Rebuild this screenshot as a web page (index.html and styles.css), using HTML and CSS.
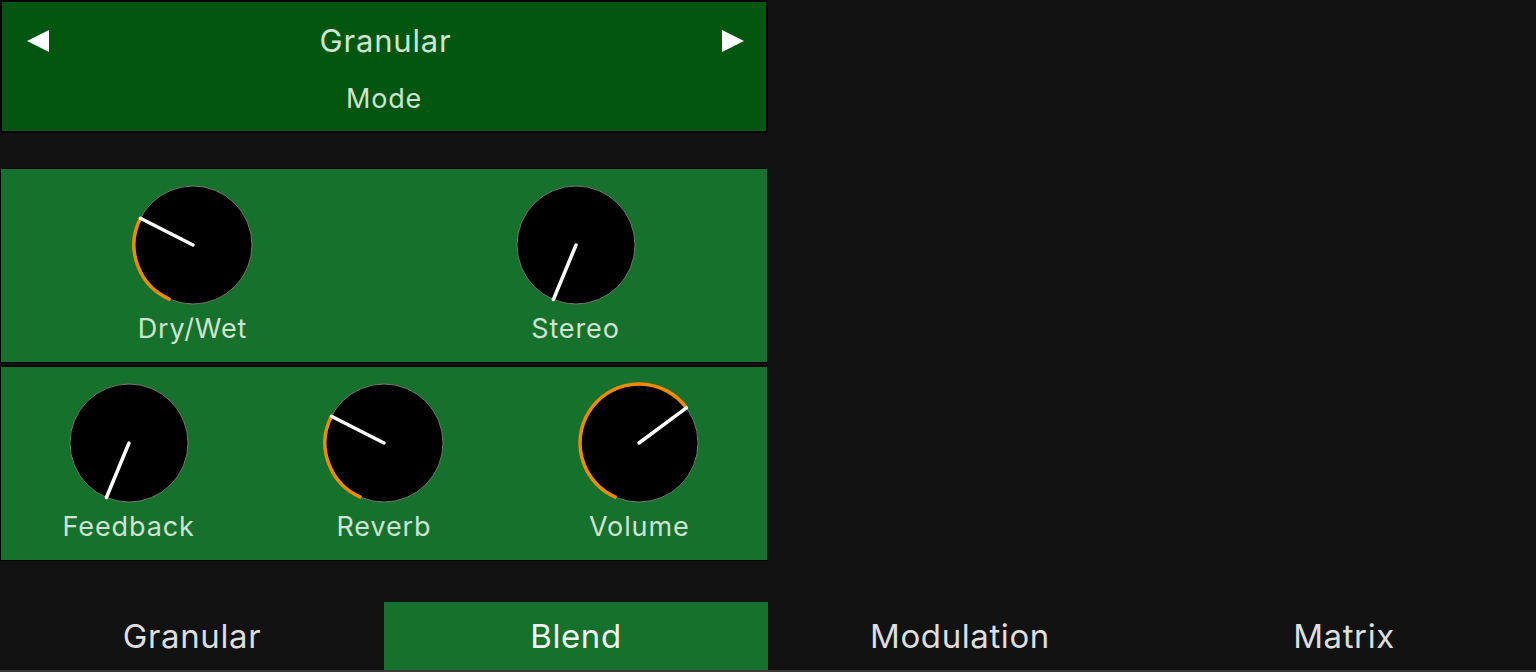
FILE: index.html
```html
<!DOCTYPE html>
<html>
<head>
<meta charset="utf-8">
<link rel="stylesheet" href="styles.css">
</head>
<body>
<div class="page">
  <div class="left">
    <div class="mode">
      <div class="mode-row">
        <svg class="arrow" width="24" height="24" viewBox="0 0 24 24"><polygon points="1,12 23,1 23,23" fill="#fff"/></svg>
        <div class="mode-value">Granular</div>
        <svg class="arrow" width="24" height="24" viewBox="0 0 24 24"><polygon points="23,12 1,1 1,23" fill="#fff"/></svg>
      </div>
      <div class="mode-label">Mode</div>
    </div>

    <div class="panel cols-2">
      <div class="knob">
        <svg width="124" height="124" viewBox="0 0 124 124">
          <circle cx="62" cy="62" r="59" class="knob-body"/>
          <path d="M39.42 116.51 A59 59 0 0 1 9.43 35.21" class="knob-arc"/>
          <line x1="62" y1="62" x2="9.43" y2="35.21" class="knob-ptr"/>
        </svg>
        <div class="knob-label">Dry/Wet</div>
      </div>
      <div class="knob">
        <svg width="124" height="124" viewBox="0 0 124 124">
          <circle cx="62" cy="62" r="59" class="knob-body"/>
          <line x1="62" y1="62" x2="39.42" y2="116.51" class="knob-ptr"/>
        </svg>
        <div class="knob-label">Stereo</div>
      </div>
    </div>

    <div class="panel cols-3">
      <div class="knob">
        <svg width="124" height="124" viewBox="0 0 124 124">
          <circle cx="62" cy="62" r="59" class="knob-body"/>
          <line x1="62" y1="62" x2="39.42" y2="116.51" class="knob-ptr"/>
        </svg>
        <div class="knob-label">Feedback</div>
      </div>
      <div class="knob">
        <svg width="124" height="124" viewBox="0 0 124 124">
          <circle cx="62" cy="62" r="59" class="knob-body"/>
          <path d="M39.42 116.51 A59 59 0 0 1 9.43 35.21" class="knob-arc"/>
          <line x1="62" y1="62" x2="9.43" y2="35.21" class="knob-ptr"/>
        </svg>
        <div class="knob-label">Reverb</div>
      </div>
      <div class="knob">
        <svg width="124" height="124" viewBox="0 0 124 124">
          <circle cx="62" cy="62" r="59" class="knob-body"/>
          <path d="M39.42 116.51 A59 59 0 1 1 109.37 26.82" class="knob-arc"/>
          <line x1="62" y1="62" x2="109.37" y2="26.82" class="knob-ptr"/>
        </svg>
        <div class="knob-label">Volume</div>
      </div>
    </div>
  </div>

  <div class="tabs">
    <div class="tab">Granular</div>
    <div class="tab active">Blend</div>
    <div class="tab">Modulation</div>
    <div class="tab">Matrix</div>
  </div>
</div>
</body>
</html>
```

FILE: styles.css
```css
* { box-sizing: border-box; }
html, body {
  margin: 0;
  padding: 0;
  background: #121212;
}
body {
  font-family: Inter, "Noto Sans", "Liberation Sans", sans-serif;
  width: 1536px;
  height: 672px;
  overflow: hidden;
}
.page {
  display: flex;
  flex-direction: column;
  height: 672px;
}
.left {
  width: 768px;
  display: flex;
  flex-direction: column;
}
.mode {
  height: 133px;
  background: #02560f;
  border: 2px solid #030303;
  display: flex;
  flex-direction: column;
  align-items: center;
  color: #cfe3d2;
}
.mode-row {
  width: 100%;
  display: flex;
  align-items: center;
  justify-content: space-between;
  padding: 0 21px 0 24px;
  margin-top: 21px;
  height: 36px;
}
.mode-value {
  font-size: 31px;
  line-height: 36px;
  letter-spacing: 0.8px;
}
.mode-label {
  font-size: 27px;
  line-height: 30px;
  letter-spacing: 0.8px;
  margin-top: 25px;
}
.panel {
  background: #16712d;
  border: 1px solid #050505;
  height: 195px;
  display: grid;
  padding-top: 14px;
}
.cols-2 { grid-template-columns: 1fr 1fr; margin-top: 35px; }
.cols-3 { grid-template-columns: 1fr 1fr 1fr; margin-top: 3px; }
.knob {
  display: flex;
  flex-direction: column;
  align-items: center;
}
.knob svg { display: block; }
.knob-body {
  fill: #000;
  stroke: #6f7a70;
  stroke-width: 1;
}
.knob-arc {
  fill: none;
  stroke: #f08a00;
  stroke-width: 3.5;
}
.knob-ptr {
  stroke: #fff;
  stroke-width: 3.5;
  stroke-linecap: round;
}
.knob-label {
  color: #cfe3d2;
  font-size: 27px;
  line-height: 30px;
  letter-spacing: 0.9px;
  margin-top: 7px;
}
.tabs {
  margin-top: 41px;
  height: 70px;
  display: grid;
  grid-template-columns: repeat(4, 1fr);
  border-bottom: 2px solid #3b3b39;
}
.tab {
  display: flex;
  align-items: center;
  justify-content: center;
  color: #dedede;
  font-size: 33px;
  letter-spacing: 0.6px;
}
.tab.active {
  background: #16712d;
  color: #f2f2f2;
}
```
